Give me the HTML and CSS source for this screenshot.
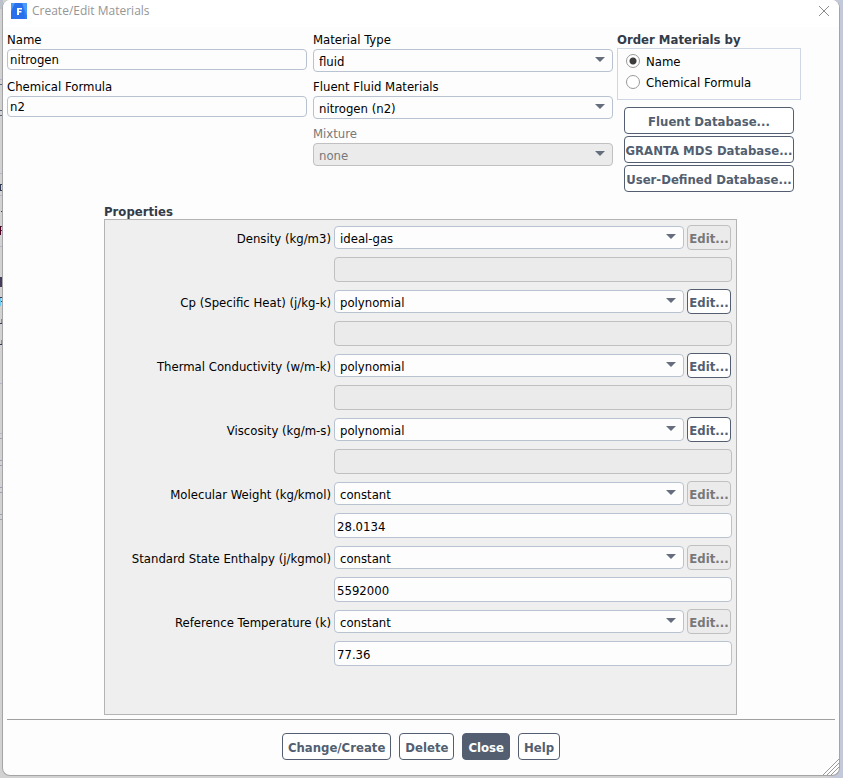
FILE: index.html
```html
<!DOCTYPE html>
<html lang="en">
<head>
<meta charset="utf-8">
<title>Create/Edit Materials</title>
<link rel="stylesheet" href="styles.css">
</head>
<body>
<svg class="backdrop" width="3" height="778" viewBox="0 0 3 778" aria-hidden="true" shape-rendering="crispEdges">
  <path fill="#bcc2cc" d="M0 0h3v9H0z"/>
  <path stroke="#b4b8c8" d="M0 79.5h3M0 173.5h3M0 195.5h3M0 246.5h3M0 383.5h3M0 433.5h3"/>
  <path stroke="#59657a" d="M0 84.5h3M0 110.5h3M0 115.5h3"/>
  <path stroke="#9ba3b2" d="M0 438.5h3M0 460.5h3M0 465.5h3M0 487.5h3M0 492.5h3M0 514.5h3M0 519.5h3"/>
  <path stroke="#333c55" d="M0 184.5h2M0 190.5h2M.5 184v7M1 211.5h2M2.5 206v5M0 226.5h3M0 230.5h3M0 297.5h3M0 301.5h3M0 323.5h3M0 344.5h3"/>
  <path fill="#453c5c" d="M0 277h2v10H0z"/>
  <path stroke="#4a0020" d="M.5 226v9"/>
  <path stroke="#6cc8ef" d="M.5 298v8"/>
  <path stroke="#c98032" d="M1.5 319v4M1.5 340v4"/>
</svg>
<form class="dialog">
  <header class="titlebar">
    <svg class="logo" width="16" height="16" viewBox="0 0 16 16" aria-hidden="true">
      <path fill="#2f7df0" d="M0 0h16v16H0z"/>
      <path fill="#4b9cfa" d="M0 0h4L0 9zM11 0h5v13z"/>
      <path fill="#2a70ec" d="M4 0h7l3 16H0V9z"/>
      <path fill="#fff" d="M6 5h5v1.500H8v1.500h2.500v1.400H8V12H6z"/>
    </svg>
    <h1 class="title">Create/Edit Materials</h1>
    <button type="button" class="dismiss" aria-label="Close window">
      <svg width="12" height="12" viewBox="0 0 12 12" aria-hidden="true"><path d="M1 1l10 10M11 1L1 11" stroke="#8c8c8c" fill="none"/></svg>
    </button>
  </header>

  <div class="top">
    <div class="column first">
      <div class="field short">
        <label for="name">Name</label>
        <input id="name" type="text" class="box" value="nitrogen">
      </div>
      <div class="field short">
        <label for="formula">Chemical Formula</label>
        <input id="formula" type="text" class="box" value="n2">
      </div>
    </div>
    <div class="column">
      <div class="field">
        <label for="type">Material Type</label>
        <span class="combo"><select id="type" class="box"><option>fluid</option></select></span>
      </div>
      <div class="field">
        <label for="fluid">Fluent Fluid Materials</label>
        <span class="combo"><select id="fluid" class="box"><option>nitrogen (n2)</option></select></span>
      </div>
      <div class="field off">
        <label for="mixture">Mixture</label>
        <span class="combo"><select id="mixture" class="box" disabled><option>none</option></select></span>
      </div>
    </div>
    <div class="side">
      <fieldset class="order">
        <legend class="heading">Order Materials by</legend>
        <div class="choices">
          <label class="choice"><input type="radio" name="order" checked>Name</label>
          <label class="choice"><input type="radio" name="order">Chemical Formula</label>
        </div>
      </fieldset>
      <div class="databases">
        <button type="button" class="btn">Fluent Database...</button>
        <button type="button" class="btn">GRANTA MDS Database...</button>
        <button type="button" class="btn">User-Defined Database...</button>
      </div>
    </div>
  </div>

  <section class="properties">
    <h2 class="heading">Properties</h2>
    <div class="panel">
      <div class="property">
        <label for="p1">Density (kg/m3)</label>
        <span class="combo"><select id="p1" class="box"><option>ideal-gas</option></select></span>
        <button type="button" class="btn" disabled>Edit...</button>
        <input type="text" class="box value" aria-label="Density value" disabled>
      </div>
      <div class="property">
        <label for="p2">Cp (Specific Heat) (j/kg-k)</label>
        <span class="combo"><select id="p2" class="box"><option>polynomial</option></select></span>
        <button type="button" class="btn">Edit...</button>
        <input type="text" class="box value" aria-label="Specific heat value" disabled>
      </div>
      <div class="property">
        <label for="p3">Thermal Conductivity (w/m-k)</label>
        <span class="combo"><select id="p3" class="box"><option>polynomial</option></select></span>
        <button type="button" class="btn">Edit...</button>
        <input type="text" class="box value" aria-label="Thermal conductivity value" disabled>
      </div>
      <div class="property">
        <label for="p4">Viscosity (kg/m-s)</label>
        <span class="combo"><select id="p4" class="box"><option>polynomial</option></select></span>
        <button type="button" class="btn">Edit...</button>
        <input type="text" class="box value" aria-label="Viscosity value" disabled>
      </div>
      <div class="property">
        <label for="p5">Molecular Weight (kg/kmol)</label>
        <span class="combo"><select id="p5" class="box"><option>constant</option></select></span>
        <button type="button" class="btn" disabled>Edit...</button>
        <input type="text" class="box value" aria-label="Molecular weight value" value="28.0134">
      </div>
      <div class="property">
        <label for="p6">Standard State Enthalpy (j/kgmol)</label>
        <span class="combo"><select id="p6" class="box"><option>constant</option></select></span>
        <button type="button" class="btn" disabled>Edit...</button>
        <input type="text" class="box value" aria-label="Standard state enthalpy value" value="5592000">
      </div>
      <div class="property">
        <label for="p7">Reference Temperature (k)</label>
        <span class="combo"><select id="p7" class="box"><option>constant</option></select></span>
        <button type="button" class="btn" disabled>Edit...</button>
        <input type="text" class="box value" aria-label="Reference temperature value" value="77.36">
      </div>
    </div>
  </section>

  <footer class="actions">
    <button type="button" class="btn">Change/Create</button>
    <button type="button" class="btn">Delete</button>
    <button type="button" class="btn primary">Close</button>
    <button type="button" class="btn">Help</button>
  </footer>
  <svg class="grip" width="16" height="16" viewBox="0 0 16 16" aria-hidden="true"><path d="M0 16L16 0M4 16L16 4M8 16l8-8M12 16l4-4" stroke="#999" fill="none"/></svg>
</form>
</body>
</html>
```
FILE: styles.css
```css
* { box-sizing: border-box; }

body {
  margin: 0;
  min-height: 100vh;
  padding: 0 3px 2px 2px;
  display: flex;
  background: linear-gradient(to right, #d2d2d2 98%, #c3c9d8 99%);
  font: 13px/16px "DejaVu Sans Condensed", "DejaVu Sans", sans-serif;
  color: #000;
}

.backdrop { position: absolute; left: 0; top: 0; }

.dialog {
  position: relative;
  flex: 1;
  display: flex;
  flex-direction: column;
  background: #fdfdfd;
  border: 1px solid #a5a5a8;
  border-top: 0;
  border-radius: 8px;
  overflow: hidden;
}

.titlebar {
  display: flex;
  align-items: center;
  height: 27px;
  padding: 0 9px 5px 8px;
  background: #fff;
}

.logo { flex: none; }

.title {
  flex: 1;
  margin: 0 0 0 5px;
  font: 12px/16px "Open Sans", sans-serif;
  color: #959595;
}

.dismiss {
  display: flex;
  padding: 0;
  border: 0;
  background: none;
}

.top {
  display: grid;
  grid-template-columns: 302fr 300fr 184px;
  padding: 5px 38px 0 4px;
  column-gap: 4px;
}

.column {
  display: flex;
  flex-direction: column;
  gap: 6px;
}

.first { padding-right: 2px; }

.field {
  display: flex;
  flex-direction: column;
  gap: 1px;
  height: 41px;
}

.off { color: #787878; }

.box {
  display: block;
  width: 100%;
  height: 23px;
  margin: 0;
  padding: 2px 5px 0;
  border: 1px solid #b8c2d0;
  border-radius: 4px;
  background: #fdfdfd;
  font: inherit;
  color: #000;
  appearance: none;
}

input.box { padding: 1px 2px 0; }
.short .box { height: 21px; padding-top: 0; }

.box:disabled {
  border-color: #c0c0c0;
  background: #ebebeb;
  color: #787878;
  opacity: 1;
}

.combo {
  position: relative;
  display: block;
}

.combo::after {
  content: "";
  position: absolute;
  right: 8px;
  top: 8px;
  border: solid transparent;
  border-width: 5px 5px 0;
  border-top-color: #646e7c;
  pointer-events: none;
}

.heading {
  margin: 0;
  padding: 0;
  font: bold 13px/16px "DejaVu Sans Condensed", "DejaVu Sans", sans-serif;
  color: #333b48;
}

.order {
  margin: 0;
  padding: 0;
  border: 0;
}

.choices {
  display: flex;
  flex-direction: column;
  gap: 5px;
  height: 52px;
  padding: 5px 8px;
  border: 1px solid #cfd7e6;
}

.choice {
  display: flex;
  align-items: flex-start;
  gap: 6px;
}

.choice input {
  width: 14px;
  height: 14px;
  margin: 0;
  border: 1px solid #999;
  border-radius: 50%;
  background: #fff;
  appearance: none;
}

.choice input:checked {
  background: radial-gradient(circle, #3c3c3c 3px, #fff 4px);
}

.databases {
  display: flex;
  flex-direction: column;
  gap: 2px;
  padding: 7px 7px 0;
}

.btn {
  height: 27px;
  padding: 2px 0 0;
  border: 1px solid #535f70;
  border-radius: 4px;
  background: #fff;
  font: bold 13px/16px "DejaVu Sans Condensed", "DejaVu Sans", sans-serif;
  color: #535f70;
  white-space: nowrap;
}

.btn:disabled {
  border-color: #c0c0c0;
  background: #ebebeb;
  color: #787878;
}

.properties {
  flex: 1;
  display: flex;
  flex-direction: column;
  margin: 12px 102px 4px 101px;
}

.properties .heading { line-height: 15px; }

.panel {
  flex: 1;
  display: flex;
  flex-direction: column;
  gap: 7px;
  padding: 5px 4px;
  border: 1px solid #b4b4b4;
  background: #efefef;
}

.property {
  display: grid;
  grid-template-columns: 222px 1fr 45px;
  grid-template-rows: 25px 25px;
  align-items: center;
  gap: 7px 3px;
}

.property label {
  padding-top: 2px;
  text-align: right;
  white-space: nowrap;
}

.property .btn {
  width: 44px;
  height: 25px;
}

.property .value {
  grid-column: 2 / 4;
  height: 25px;
}

.actions {
  display: flex;
  justify-content: center;
  gap: 8px;
  margin: 0 4px;
  padding: 13px 0 15px;
  border-top: 1px solid #a0a0a0;
}

.actions .btn { padding: 2px 5px 0; }

.actions .primary {
  background: #535f70;
  color: #fff;
}

.grip {
  position: absolute;
  right: 0;
  bottom: 0;
}
```
